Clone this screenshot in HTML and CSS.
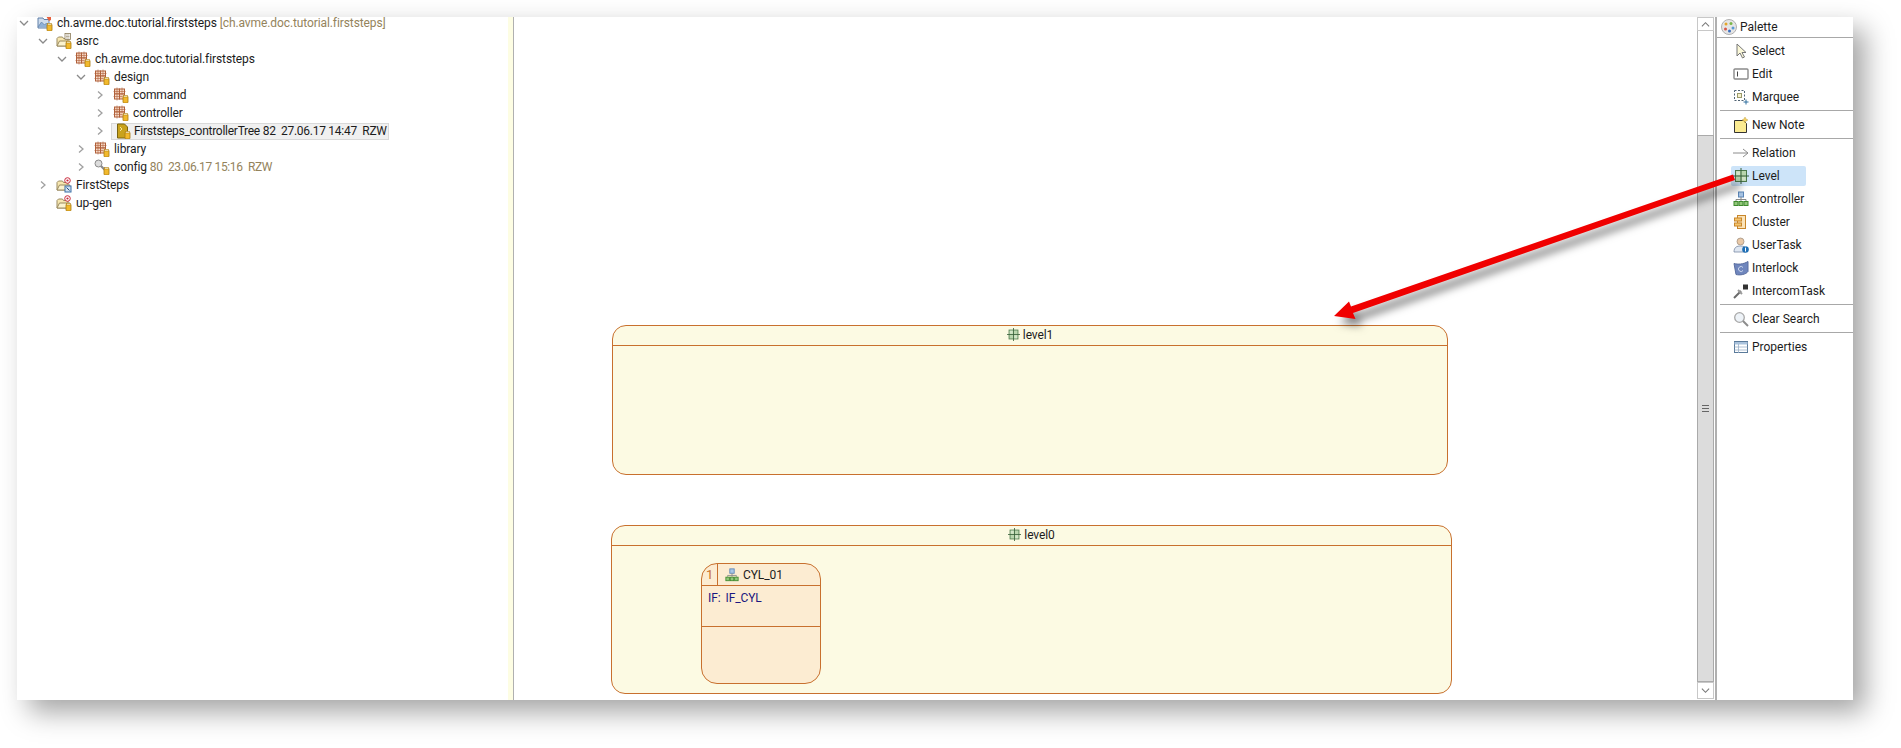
FILE: index.html
```html
<!DOCTYPE html>
<html lang="en">
<head>
<meta charset="utf-8">
<title>Firststeps controller tree</title>
<link rel="stylesheet" href="styles.css">
</head>
<body>
<svg class="defs" width="0" height="0" aria-hidden="true">
  <defs>
    <symbol id="jar" viewBox="0 0 16 16">
      <rect x="10" y="9" width="5" height="7" rx="1" fill="#f2b92c" stroke="#a8780f" stroke-width=".8"/>
      <rect x="10.5" y="8.4" width="4" height="1.6" fill="#fff6d0" stroke="#a8780f" stroke-width=".5"/>
    </symbol>
    <symbol id="pkg" viewBox="0 0 16 16">
      <rect x="1.5" y="2" width="5" height="5" fill="#f2cdb6" stroke="#b0603a"/>
      <rect x="6.5" y="2" width="5" height="5" fill="#f7dccb" stroke="#b0603a"/>
      <rect x="1.5" y="7" width="5" height="5" fill="#f7dccb" stroke="#b0603a"/>
      <rect x="6.5" y="7" width="5" height="5" fill="#f2cdb6" stroke="#b0603a"/>
      <path d="M4 .5v13M9 .5v7M.5 4.5h12M.5 9.500h9" stroke="#b0603a" stroke-width=".6" fill="none"/>
      <use href="#jar"/>
    </symbol>
    <symbol id="srcf" viewBox="0 0 16 16">
      <path d="M1 13V5.5L2.5 4h4l1 1.500H12V13z" fill="#f7e7b0" stroke="#9a8a60"/>
      <path d="M1 13l2.500-5H14l-2 5z" fill="#fbf3cf" stroke="#9a8a60"/>
      <rect x="9" y=".5" width="5.500" height="6" fill="#fff" stroke="#8a7a58" stroke-width=".8"/>
      <path d="M10 2h3.500M10 3.500h3.500M10 5h3.500" stroke="#8a7a58" stroke-width=".6"/>
      <use href="#jar"/>
    </symbol>
    <symbol id="projf" viewBox="0 0 16 16">
      <path d="M1 13V5.500L2.500 4h4l1 1.500H12V13z" fill="#f7e7b0" stroke="#9a8a60"/>
      <path d="M1 13l2.500-5H14l-2 5z" fill="#fbf3cf" stroke="#9a8a60"/>
      <circle cx="11.500" cy="3.500" r="2.800" fill="#fff" stroke="#c8283a"/>
      <circle cx="11.500" cy="3.500" r="1.100" fill="#c8283a"/>
    </symbol>
    <symbol id="root" viewBox="0 0 16 16">
      <path d="M1 13V3h5l1 1.500h5V13z" fill="#cfdcec" stroke="#5f7fa8"/>
      <path d="M1 12l3.500-5 3 3 2-2 3 4" fill="#8fb0d6" stroke="#5f7fa8" stroke-width=".7"/>
      <path d="M9 1l5 0 0 4-2 1z" fill="#e8603c"/>
      <use href="#jar"/>
    </symbol>
    <symbol id="lvl" viewBox="0 0 16 16">
      <rect x="2.500" y="2.500" width="11" height="11" fill="#b9d6ae" stroke="#4d7a4c"/>
      <path d="M8 0v16M0 8h16" stroke="#355f38" stroke-width="1"/>
      <path d="M3.500 3.500h3.500v3.500h-3.500zM9 9h3.500v3.500H9z" fill="#d3e6c9"/>
    </symbol>
    <symbol id="ctl" viewBox="0 0 16 16">
      <rect x="5.500" y="1" width="5" height="5" fill="#a9c6e6" stroke="#5b86b8"/>
      <path d="M8 6v3M3 10V8.500h10V10M8 9v1" stroke="#8a8a8a" fill="none"/>
      <rect x="1" y="10.500" width="4" height="4" fill="#92c77a" stroke="#3f8a2e"/>
      <rect x="6" y="10.500" width="4" height="4" fill="#92c77a" stroke="#3f8a2e"/>
      <rect x="11" y="10.500" width="4" height="4" fill="#92c77a" stroke="#3f8a2e"/>
    </symbol>
    <symbol id="chev" viewBox="0 0 10 10">
      <path d="M3 1.500L7 5 3 8.500" fill="none" stroke="#a0a0a0" stroke-width="1.300"/>
    </symbol>
    <symbol id="chevd" viewBox="0 0 10 10">
      <path d="M1 3l4 4 4-4" fill="none" stroke="#8a8a8a" stroke-width="1.300"/>
    </symbol>
  </defs>
</svg>

<main class="window">
  <section class="tree">
    <div class="row"><svg class="tw"><use href="#chevd"/></svg><svg class="ic"><use href="#root"/></svg><span>ch.avme.doc.tutorial.firststeps <i>[ch.avme.doc.tutorial.firststeps]</i></span></div>
    <div class="row d1"><svg class="tw"><use href="#chevd"/></svg><svg class="ic"><use href="#srcf"/></svg><span>asrc</span></div>
    <div class="row d2"><svg class="tw"><use href="#chevd"/></svg><svg class="ic"><use href="#pkg"/></svg><span>ch.avme.doc.tutorial.firststeps</span></div>
    <div class="row d3"><svg class="tw"><use href="#chevd"/></svg><svg class="ic"><use href="#pkg"/></svg><span>design</span></div>
    <div class="row d4"><svg class="tw"><use href="#chev"/></svg><svg class="ic"><use href="#pkg"/></svg><span>command</span></div>
    <div class="row d4"><svg class="tw"><use href="#chev"/></svg><svg class="ic"><use href="#pkg"/></svg><span>controller</span></div>
    <div class="row d4"><svg class="tw"><use href="#chev"/></svg>
      <div class="sel">
        <svg class="ic" viewBox="0 0 16 16"><path d="M2.500 1h7l3 3v11h-10z" fill="#c9a21c" stroke="#7a6410"/><path d="M5 4l2 2-2 2" stroke="#f3e6a0" fill="none"/><use href="#jar"/></svg>
        <span>Firststeps_controllerTree 82&nbsp; 27.06.17 14:47&nbsp; RZW</span>
      </div>
    </div>
    <div class="row d3"><svg class="tw"><use href="#chev"/></svg><svg class="ic"><use href="#pkg"/></svg><span>library</span></div>
    <div class="row d3"><svg class="tw"><use href="#chev"/></svg><svg class="ic" viewBox="0 0 16 16"><circle cx="4.500" cy="4.500" r="3.500" fill="#dcdcdc" stroke="#8a8a8a"/><path d="M7 7l5 5" stroke="#8a8a8a" stroke-width="2.200"/><use href="#jar"/></svg><span>config <i class="meta">80&nbsp; 23.06.17 15:16&nbsp; RZW</i></span></div>
    <div class="row d1"><svg class="tw"><use href="#chev"/></svg><svg class="ic" viewBox="0 0 16 16"><use href="#projf"/><rect x="9" y="9" width="6" height="6" fill="#cfe0f2" stroke="#3a6ea5"/><path d="M10.500 10.500l3 3" stroke="#274f7a"/></svg><span>FirstSteps</span></div>
    <div class="row d1"><span class="tw"></span><svg class="ic" viewBox="0 0 16 16"><use href="#projf"/><use href="#jar"/></svg><span>up-gen</span></div>
  </section>
  <div class="sash-y"></div>

  <section class="canvas">
    <div class="level level-one">
      <div class="level-head"><svg class="ic-s"><use href="#lvl"/></svg>level1</div>
    </div>
    <div class="level level-zero">
      <div class="level-head"><svg class="ic-s"><use href="#lvl"/></svg>level0</div>
      <div class="node">
        <div class="node-head"><span class="node-num">1</span><svg class="ic-n"><use href="#ctl"/></svg><span>CYL_01</span></div>
        <div class="node-body"><span>IF:</span><span>IF_CYL</span></div>
      </div>
    </div>
  </section>

  <section class="scroll">
    <div class="btn-up"><svg class="chev-up" viewBox="0 0 10 10"><path d="M1 7l4-4 4 4" fill="none" stroke="#777" stroke-width="1.200"/></svg></div>
    <div class="track"></div>
    <div class="thumb"><span class="grip"></span></div>
    <div class="btn-down"><svg class="chev-up" viewBox="0 0 10 10"><path d="M1 3l4 4 4-4" fill="none" stroke="#777" stroke-width="1.200"/></svg></div>
  </section>

  <aside class="palette">
    <header class="pal-head">
      <svg class="ic" viewBox="0 0 16 16"><circle cx="8" cy="8" r="7.500" fill="#e6e6e6" stroke="#b0b0b0"/><circle cx="5" cy="5" r="1.500" fill="#e4a62a"/><circle cx="10" cy="4.500" r="1.500" fill="#7ab648"/><circle cx="12" cy="9" r="1.500" fill="#5b9ad5"/><circle cx="8.500" cy="12" r="1.500" fill="#3b6fc0"/><circle cx="4.500" cy="10" r="1.500" fill="#d9584a"/></svg>
      <span>Palette</span>
    </header>
    <div class="pal-item"><svg class="ic" viewBox="0 0 16 16"><path d="M4 1v12l3-3 2.500 5 2-1-2.500-4.500h4z" fill="#fbf8d8" stroke="#777"/></svg><span>Select</span></div>
    <div class="pal-item"><svg class="ic" viewBox="0 0 16 16"><rect x="1" y="3" width="14" height="10" rx="1" fill="#fff" stroke="#8a8a8a" stroke-width="1.400"/><path d="M4.500 5.500v5" stroke="#444"/></svg><span>Edit</span></div>
    <div class="pal-item"><svg class="ic" viewBox="0 0 16 16"><rect x="1.500" y="1.500" width="10" height="10" fill="none" stroke="#4f6272" stroke-dasharray="2 1.500"/><rect x="4.500" y="4.500" width="4" height="4" fill="#f5f0cf" stroke="#9a9a6a"/><path d="M13 10.500v5M10.500 13h5" stroke="#2e6e9e"/></svg><span>Marquee</span></div>
    <div class="pal-rule"></div>
    <div class="pal-item"><svg class="ic" viewBox="0 0 16 16"><path d="M1.500 3.500h9l3 3v9h-12z" fill="#fbeb92" stroke="#333"/><path d="M12 0l1 2 2 1-2 1-1 2-1-2-2-1 2-1z" fill="#f6cf5e" stroke="#b49a3a" stroke-width=".4"/></svg><span>New Note</span></div>
    <div class="pal-rule"></div>
    <div class="pal-item"><svg class="ic" viewBox="0 0 16 16"><path d="M0 8h15M10 4l5 4-5 4" fill="none" stroke="#8c8c8c"/></svg><span>Relation</span></div>
    <div class="pal-item is-hover"><svg class="ic"><use href="#lvl"/></svg><span>Level</span></div>
    <div class="pal-item"><svg class="ic"><use href="#ctl"/></svg><span>Controller</span></div>
    <div class="pal-item"><svg class="ic" viewBox="0 0 16 16"><rect x="4.500" y="1.500" width="8" height="13" fill="#fbe3b8" stroke="#c8862a"/><rect x="1.500" y="4" width="7" height="3" fill="#f5c56e" stroke="#c8862a"/><rect x="1.500" y="9" width="7" height="3" fill="#f5c56e" stroke="#c8862a"/></svg><span>Cluster</span></div>
    <div class="pal-item"><svg class="ic" viewBox="0 0 16 16"><circle cx="7.500" cy="4.500" r="3.500" fill="#e9c9a8" stroke="#9b8a78" stroke-width=".7"/><path d="M1 15c0-5 3-6 6.500-6s5 1 5 3v3z" fill="#dfe7f2" stroke="#7a8aa5" stroke-width=".8"/><circle cx="12.500" cy="12.500" r="3.300" fill="#1f6fb5"/><path d="M12.500 11v3.500M12.500 9.800v.6" stroke="#fff"/></svg><span>UserTask</span></div>
    <div class="pal-item"><svg class="ic" viewBox="0 0 16 16"><path d="M1 3.500c4 1 9 1 14-2v10c-2 3-8 4-12 3z" fill="#6f86bd" stroke="#5a6ea0"/><path d="M10 7.500a2.500 2.500 0 1 0 0 3" fill="none" stroke="#cdd8ee"/></svg><span>Interlock</span></div>
    <div class="pal-item"><svg class="ic" viewBox="0 0 16 16"><path d="M1 15l7-7" stroke="#6a6a6a" stroke-width="2"/><path d="M5 7l4 4" stroke="#9a9a9a" stroke-width="2"/><rect x="10" y="1.500" width="5" height="5" fill="#333"/></svg><span>IntercomTask</span></div>
    <div class="pal-rule"></div>
    <div class="pal-item"><svg class="ic" viewBox="0 0 16 16"><circle cx="6.500" cy="6.500" r="4.800" fill="#eef3f8" stroke="#a8a8a8" stroke-width="1.300"/><path d="M10 10l5 5" stroke="#8c8c8c" stroke-width="2"/></svg><span>Clear Search</span></div>
    <div class="pal-rule"></div>
    <div class="pal-item"><svg class="ic" viewBox="0 0 16 16"><rect x="1.500" y="2.500" width="13" height="11" fill="#fff" stroke="#5a7a9a"/><path d="M1.500 3h13v2.500h-13z" fill="#a9c2dc"/><path d="M1.500 8h13M1.500 11h13M5.500 5v9" stroke="#9ab0c8" stroke-width=".8"/></svg><span>Properties</span></div>
  </aside>
</main>

<svg class="arrow" viewBox="0 0 1901 748" aria-hidden="true">
  <path d="M1334 316L1349 301.500 1351 306.500 1733 174.500 1735 180 1353 313 1355.500 319z" fill="#f00000"/>
</svg>
</body>
</html>
```

FILE: styles.css
```css
* { box-sizing: border-box; }

html, body {
  margin: 0;
  height: 100%;
  overflow: hidden;
  background: #fff;
}

body {
  padding: 17px 0 0 17px;
  font: 12px/16px Roboto, "Noto Sans", sans-serif;
  color: #1c1c1c;
}

.defs { position: absolute; }

.window {
  display: flex;
  width: 1836px;
  height: 683px;
  background: #fff;
  box-shadow: 12px 12px 26px rgba(0, 0, 0, .36);
}

/* project tree */
.tree {
  width: 491px;
  flex: none;
  overflow: hidden;
  letter-spacing: -.1px;
}

.row {
  display: flex;
  align-items: center;
  height: 18px;
  padding-left: 2px;
  white-space: nowrap;
}

.tree .row:first-child {
  height: 12px;
  margin-bottom: 3px;
  line-height: 12px;
}

.row i { font-style: normal; color: #94835c; }
.row .meta { letter-spacing: -.35px; }
.d1 { padding-left: 21px; }
.d2 { padding-left: 40px; }
.d3 { padding-left: 59px; }
.d4 { padding-left: 78px; }

.tw {
  width: 10px;
  height: 10px;
  flex: none;
  margin-right: 8px;
}

.ic {
  width: 16px;
  height: 16px;
  flex: none;
}

.row > .ic { margin-right: 4px; }

.sel {
  display: flex;
  align-items: center;
  height: 17px;
  margin-left: -2px;
  padding: 0 1px 0 3px;
  gap: 3px;
  letter-spacing: -.27px;
  background: #f0f0f0;
  border: 1px solid #d9d9d9;
}

.sash-y {
  width: 6px;
  flex: none;
  background: #fdfde3;
  border-right: 1px solid #b0b0b0;
}

/* diagram */
.canvas {
  position: relative;
  flex: 1;
  min-width: 0;
  overflow: hidden;
  letter-spacing: -.1px;
}

.level {
  position: absolute;
  background: #fcfae3;
  border: 1px solid #c8702e;
  border-radius: 14px;
}

.level-one { left: 98px; top: 308px; width: 836px; height: 150px; }
.level-zero { left: 97px; top: 508px; width: 841px; height: 169px; }

.level-head {
  display: flex;
  align-items: center;
  justify-content: center;
  gap: 3px;
  height: 20px;
  padding-bottom: 2px;
  border-bottom: 1px solid #c8702e;
}

.ic-s { width: 13px; height: 13px; }

.node {
  position: absolute;
  left: 89px;
  top: 37px;
  width: 120px;
  height: 121px;
  background: #fcecd2;
  border: 1px solid #c8702e;
  border-radius: 16px;
}

.node-head {
  display: flex;
  align-items: center;
  height: 22px;
  border-bottom: 1px solid #c8702e;
}

.node-num {
  width: 16px;
  height: 100%;
  font-size: 13px;
  text-align: center;
  line-height: 21px;
  color: #c8702e;
  border-right: 1px solid #c8702e;
}

.ic-n { width: 14px; height: 14px; margin: 0 4px 0 7px; }

.node-body {
  display: flex;
  gap: 5px;
  height: 41px;
  padding: 4px 0 0 6px;
  color: #1b1780;
  border-bottom: 1px solid #c8702e;
}

/* scrollbar */
.scroll {
  display: flex;
  flex-direction: column;
  width: 18px;
  flex: none;
  margin-bottom: 1px;
  border-right: 1px solid #fff;
}

.btn-up, .btn-down {
  display: flex;
  align-items: center;
  justify-content: center;
  height: 14px;
  flex: none;
  background: #fff;
  border: 1px solid #c8c8c8;
}

.btn-down { height: 17px; }

.track {
  height: 104px;
  flex: none;
  border: solid #b8b8b8;
  border-width: 0 1px;
}

.thumb {
  display: flex;
  flex: 1;
  align-items: center;
  justify-content: center;
  background: #dcdcdc;
  border: 1px solid #aaa;
}

.grip {
  width: 7px;
  height: 7px;
  border: solid #666;
  border-width: 1px 0;
  background: linear-gradient(#666, #666) center / 100% 1px no-repeat;
}

.chev-up { width: 9px; height: 9px; }

/* palette */
.palette {
  display: flex;
  flex-direction: column;
  width: 138px;
  flex: none;
  border-left: 2px solid #b0b0b0;
}

.pal-head {
  display: flex;
  align-items: center;
  flex: none;
  gap: 3px;
  height: 21px;
  margin-bottom: 1px;
  padding-left: 4px;
  border-bottom: 1px solid #a8a8a8;
}

.pal-item {
  display: flex;
  align-items: center;
  flex: none;
  gap: 3px;
  width: 75px;
  height: 20px;
  margin: 1.500px 0 1.500px 14px;
  padding-left: 2px;
  white-space: nowrap;
  border-radius: 2px;
}

.pal-item.is-hover { background: #cde4f9; }

.pal-rule {
  flex: none;
  height: 1px;
  margin: 2px 0 2px 3px;
  background: #a8a8a8;
}

.arrow {
  position: absolute;
  left: 0;
  top: 0;
  width: 1901px;
  height: 748px;
  pointer-events: none;
  filter: drop-shadow(6px 7px 4px rgba(0, 0, 0, .5));
}
```
